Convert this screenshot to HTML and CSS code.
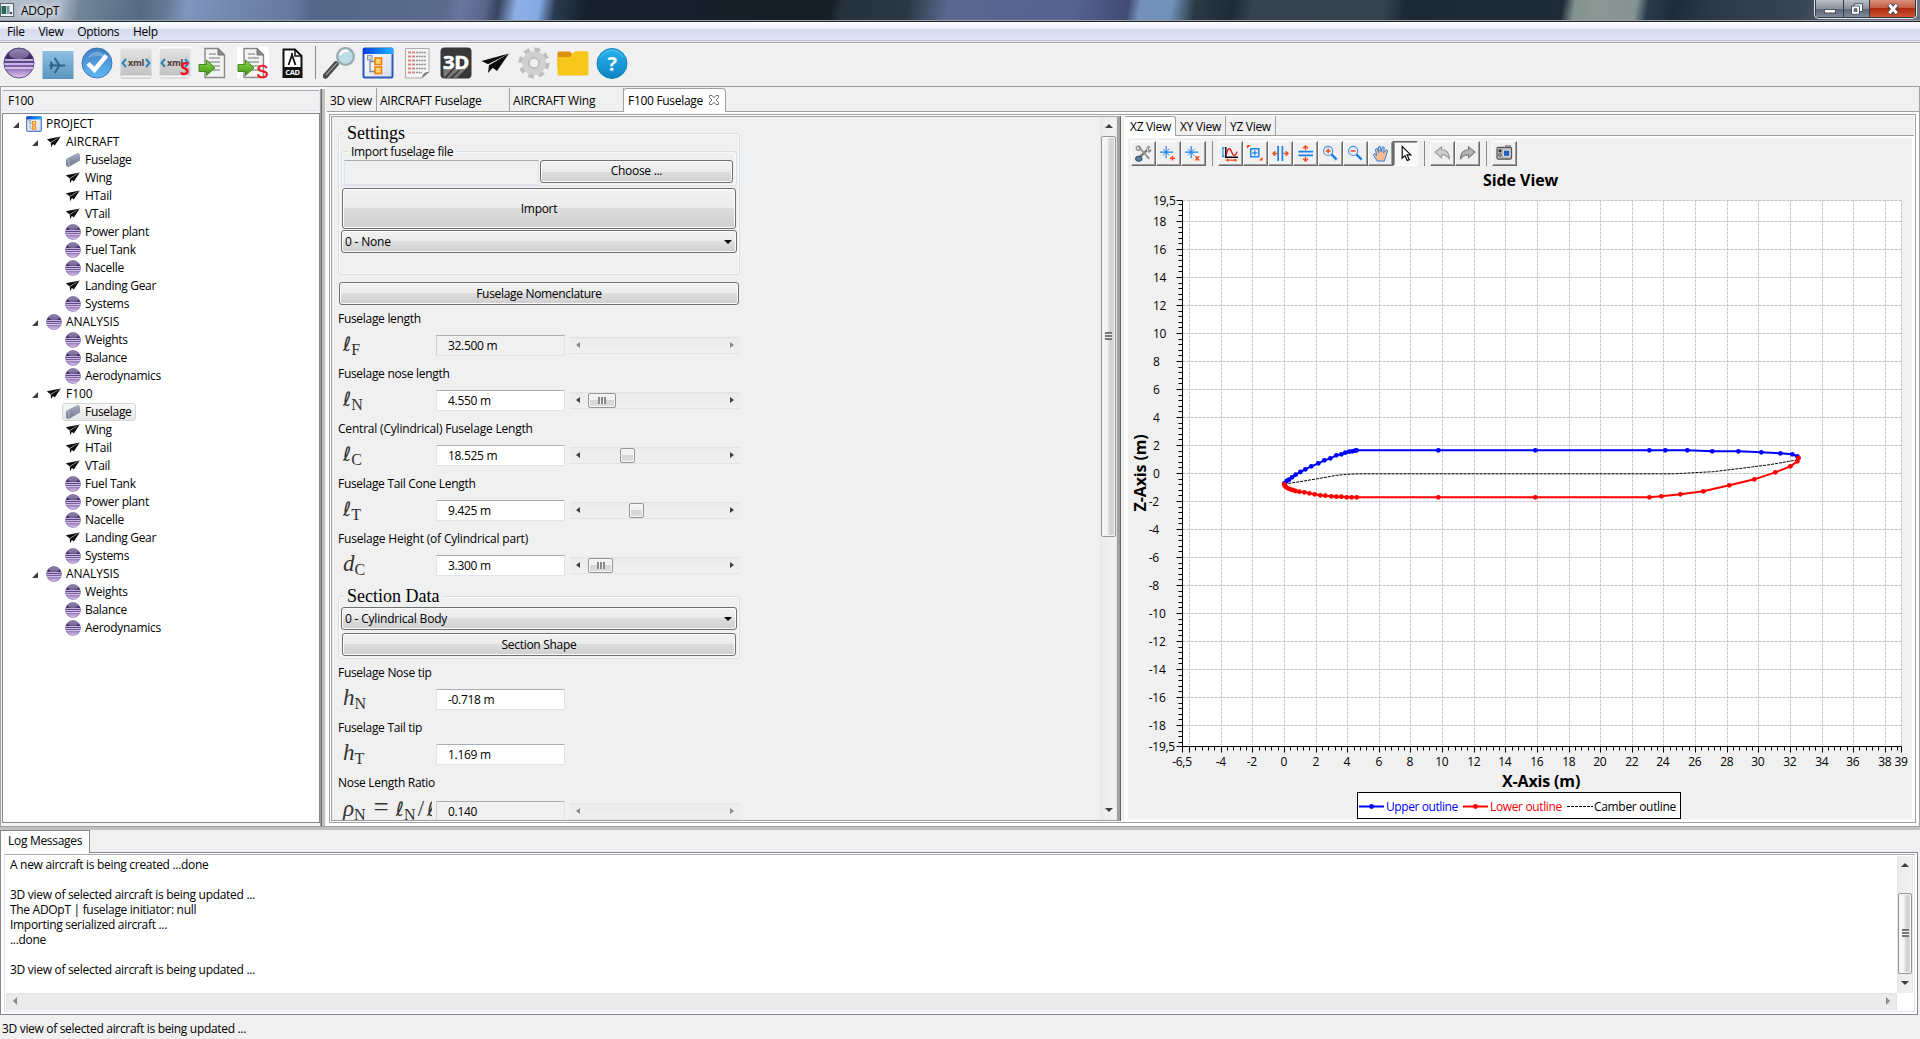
FILE: index.html
```html
<!DOCTYPE html>
<html lang="en">
<head>
<meta charset="utf-8">
<title>ADOpT</title>
<link rel="stylesheet" href="styles.css">
</head>
<body>
<svg class="sprite" aria-hidden="true">
  <defs>
    <linearGradient id="gPurple" x1="0" y1="0" x2="0" y2="1"><stop offset="0" stop-color="#6a5590"/><stop offset=".3" stop-color="#3c2466"/><stop offset=".6" stop-color="#7a5fa6"/><stop offset="1" stop-color="#e6c8f4"/></linearGradient>
    <linearGradient id="gBlueTop" x1="0" y1="0" x2="1" y2="0"><stop offset="0" stop-color="#0a3fe0"/><stop offset="1" stop-color="#19b4ff"/></linearGradient>
    <linearGradient id="gPage" x1="0" y1="0" x2="1" y2="1"><stop offset="0" stop-color="#fff"/><stop offset="1" stop-color="#d5dcef"/></linearGradient>
    <linearGradient id="gSky" x1="0" y1="0" x2="0" y2="1"><stop offset="0" stop-color="#8fc0e4"/><stop offset="1" stop-color="#5a95bd"/></linearGradient>
    <linearGradient id="gCheck" x1="0" y1="0" x2="0" y2="1"><stop offset="0" stop-color="#3d7fc4"/><stop offset="1" stop-color="#62b8f5"/></linearGradient>
    <linearGradient id="gGrey" x1="0" y1="0" x2="0" y2="1"><stop offset="0" stop-color="#e2e2e2"/><stop offset="1" stop-color="#bfbfbf"/></linearGradient>
    <linearGradient id="gGreen" x1="0" y1="0" x2="0" y2="1"><stop offset="0" stop-color="#8fd84a"/><stop offset="1" stop-color="#3f9416"/></linearGradient>
    <linearGradient id="gHelp" x1="0" y1="0" x2="0" y2="1"><stop offset="0" stop-color="#27b3ee"/><stop offset="1" stop-color="#1083c4"/></linearGradient>
    <linearGradient id="gFus" x1="0" y1="0" x2="0" y2="1"><stop offset="0" stop-color="#a9b0c2"/><stop offset="1" stop-color="#6e768a"/></linearGradient>
  </defs>
  <symbol id="ball" viewBox="0 0 32 32"><circle cx="16" cy="16" r="15" fill="url(#gPurple)" stroke="#5d4a88"/><ellipse cx="16" cy="7" rx="10" ry="5" fill="#fff" opacity=".3"/><path d="M2 13h28M1.500 17h29M2 21h28" stroke="#ead9f6" stroke-width="1.500"/></symbol>
  <symbol id="plane" viewBox="0 0 32 32"><path d="M2.500 14 30 6.500 9 17.300Z" fill="#0a0a0a"/><path d="M10 18.300 30 6.500 18 24 13.800 20.800 9 26Z" fill="#0a0a0a"/></symbol>
  <symbol id="planeSmall" viewBox="0 0 16 16"><path d="M.8 5.300 14.800 2.500 4.500 8.200Z" fill="#0a0a0a"/><path d="M4.800 8.800 14.800 2.500 8.800 11.500 7 10 5 13.300Z" fill="#0a0a0a"/><path d="M4.500 8.300 12 4.200" stroke="#777" stroke-width=".5"/></symbol>
  <symbol id="fus" viewBox="0 0 16 16"><path d="M1 7 12.500 1Q15 1 15 4V8.500L4.500 14.500Q1 15.500 1 12Z" fill="url(#gFus)"/><path d="M1.500 7Q4 7 4 9.500V14" stroke="#c5cad6" stroke-width=".8" fill="none"/></symbol>
  <symbol id="proj" viewBox="0 0 32 32"><rect x="1.500" y="1.500" width="29" height="29" rx="1" fill="url(#gPage)" stroke="#2f5bb8" stroke-width="2"/><rect x="1" y="1" width="30" height="6" fill="url(#gBlueTop)"/><path d="M8 9.500v15h5M8 14.500h5" stroke="#7c86a0" stroke-width="1.300" fill="none"/><rect x="5.500" y="8.500" width="4.500" height="4.500" fill="#cfd5e2" stroke="#8f98ae"/><rect x="13" y="11" width="6.500" height="6.500" fill="#ffd667" stroke="#ee7c12" stroke-width="1.600"/><rect x="13" y="20" width="6.500" height="6.500" fill="#ffd667" stroke="#ee7c12" stroke-width="1.600"/></symbol>
  <symbol id="doc" viewBox="0 0 32 32"><path d="M7 1.500H20L26.500 8V30.500H7Z" fill="#f2f2f2" stroke="#8a8a8a" stroke-width="1.400"/><path d="M20 1.500V8H26.500Z" fill="#888" stroke="#777"/><path d="M11 7h7M11 11h11M11 15h11M14 19h8M14 23h8" stroke="#a3a3a3" stroke-width="1.300"/><path d="M1 17.500H8.500V13L17 20.800 8.500 28.500V24.500H1Z" fill="url(#gGreen)" stroke="#3f8a1a"/></symbol>
  <symbol id="xml" viewBox="0 0 32 32"><rect x=".5" y="1.500" width="31" height="30" rx="2" fill="url(#gGrey)"/><path d="M1 29.500h30" stroke="#f7f7f7" stroke-width="2"/><path d="M6 12 2.500 16 6 20M26 12 29.500 16 26 20" stroke="#2b86b8" stroke-width="2" fill="none"/><text x="16" y="19" font-size="9" class="ico-b" text-anchor="middle" fill="#4d3a3a">xml</text></symbol>
</svg>

<header class="titlebar">
  <svg class="app" viewBox="0 0 14 14"><rect x=".5" y=".5" width="13" height="13" fill="#eef2f5" stroke="#5d6670"/><rect x="1.500" y="3" width="4.500" height="8" fill="#276a52"/><rect x="6.500" y="3" width="3" height="8" fill="#7a96ad"/><rect x="10" y="9" width="2" height="2" fill="#444"/></svg>
  <span class="title">ADOpT</span>
  <div class="winbtns">
    <span class="wb min"><svg viewBox="0 0 16 12"><rect x="2.500" y="6.500" width="11" height="3.500" fill="#fff" stroke="#4a5160"/></svg></span>
    <span class="wb max"><svg viewBox="0 0 16 12"><path d="M5 .8H13.500V8.500H5Z" fill="#fff" stroke="#4a5160"/><path d="M2.500 3H10.500V11.300H2.500Z" fill="#fff" stroke="#4a5160"/><rect x="5.300" y="5.800" width="2.500" height="2.500" fill="#7d8795" stroke="#4a5160"/></svg></span>
    <span class="wb close"><svg viewBox="0 0 16 12"><path d="M4 1.500 12 10.500M12 1.500 4 10.500" stroke="#4c4450" stroke-width="5"/><path d="M4.300 1.800 11.700 10.200M11.700 1.800 4.300 10.200" stroke="#fff" stroke-width="2.900"/></svg></span>
  </div>
</header>
<nav class="menubar"><span>File</span><span>View</span><span>Options</span><span>Help</span></nav>

<div class="toolbar">
  <svg><use href="#ball"/></svg>
  <svg viewBox="0 0 32 32"><rect x="1" y="1" width="30" height="6" fill="#f6f8fa"/><rect x=".5" y="4" width="31" height="28" fill="url(#gSky)"/><path d="M8 18.500H22.500M13 11.500 17.500 18.500 13 25.500M9 15.500 10.500 18.500 9 21.500" stroke="#2e6286" stroke-width="2" fill="none" stroke-linecap="round"/></svg>
  <svg viewBox="0 0 32 32"><circle cx="16" cy="16" r="15" fill="url(#gCheck)" stroke="#3f79b5"/><path d="M6 11Q16 -2 26 11 16 7 6 11Z" fill="#fff" opacity=".25"/><path d="M7 16.500 13.500 23 25.500 8.500" stroke="#fff" stroke-width="4.400" fill="none"/></svg>
  <svg><use href="#xml"/></svg>
  <svg viewBox="0 0 32 32"><rect width="32" height="32" fill="#fff"/><use href="#xml"/><text x="21" y="28" font-size="17" class="ico-b" fill="#f0101c">S</text></svg>
  <svg><use href="#doc"/></svg>
  <svg viewBox="0 0 32 32"><rect width="32" height="32" fill="#fff"/><use href="#doc"/><text x="19.500" y="30.500" font-size="18" class="ico-s" fill="#f0101c">S</text></svg>
  <svg viewBox="0 0 32 32"><path d="M7.500 2.500H19L25.500 9V30H7.500Z" fill="#fff" stroke="#111" stroke-width="2"/><path d="M19 2.500V9H25.500" fill="none" stroke="#111" stroke-width="1.500"/><path d="M12.500 18 16 8 19.500 18M16 6V9" stroke="#111" stroke-width="1.800" fill="none"/><rect x="7" y="20" width="19" height="10" fill="#111"/><text x="16.500" y="28" font-size="7.500" class="ico-b" fill="#fff" text-anchor="middle">CAD</text></svg>
  <i class="tsep"></i>
  <svg viewBox="0 0 32 32"><path d="M2.500 29 13 17" stroke="#4a4a4a" stroke-width="5.500" stroke-linecap="round"/><path d="M3 28 14 16" stroke="#999" stroke-width="1.300"/><ellipse cx="22.500" cy="9.500" rx="8.300" ry="8.500" fill="#bcdde6" stroke="#9aa7ac" stroke-width="2.200"/><path d="M17 8Q19 3 25 4" stroke="#fff" stroke-width="2.500" fill="none"/></svg>
  <svg><use href="#proj"/></svg>
  <svg viewBox="0 0 32 32"><path d="M4.500 1.500H28V25L21 31H4.500Z" fill="#f5f5f5" stroke="#ababab"/><path d="M28 25Q22 24 21 31Z" fill="#777"/><path d="M7 5.500h7M7 9.500h7M7 13.500h7M7 17.500h7M7 21.500h7M7 25.500h7" stroke="#e08585" stroke-width="1.800" stroke-dasharray="3 1"/><path d="M15 5.500h10M15 9.500h10M15 13.500h10M15 17.500h10M15 21.500h10M15 25.500h6" stroke="#929292" stroke-width="1.400" stroke-dasharray="2 .6"/></svg>
  <svg viewBox="0 0 32 32"><rect x=".5" y=".5" width="31" height="31" rx="4" fill="#38383a"/><path d="M3 21 12 22 4 31ZM14 22 21 21 9 31.500H6ZM22 21 28 20 16 31.500H12Z" fill="#77777a"/><text x="16" y="22" font-size="18.500" class="ico-b" fill="#fff" stroke="#fff" stroke-width=".6" text-anchor="middle" textLength="26" lengthAdjust="spacingAndGlyphs">3D</text></svg>
  <svg><use href="#plane"/></svg>
  <svg viewBox="0 0 32 32"><circle cx="16" cy="16" r="12.500" fill="none" stroke="#bdbdbd" stroke-width="6" stroke-dasharray="5.300 4.518"/><circle cx="16" cy="16" r="8.500" fill="none" stroke="#cfcfcf" stroke-width="7"/><circle cx="16" cy="16" r="5" fill="#f0f0f0" stroke="#a5a5a5"/></svg>
  <svg viewBox="0 0 32 32"><path d="M.5 6Q.5 4.500 2 4.500H13L16 8V20H.5Z" fill="#e09010"/><path d="M13 10 17 5Q17 4.300 18.500 4.300H30Q31.500 4.300 31.500 6V27Q31.500 28.500 30 28.500H2Q.5 28.500 .5 27V10Z" fill="#f5c71a"/></svg>
  <svg viewBox="0 0 32 32"><circle cx="16" cy="16.500" r="15" fill="url(#gHelp)" stroke="#1682bd"/><path d="M5 10Q16 -4 27 10" stroke="#7fd3f7" fill="none" opacity=".6"/><text x="16" y="23.500" font-size="20" class="ico-b" fill="#fff" text-anchor="middle">?</text></svg>
</div>

<main class="main">
  <aside class="left">
    <div class="lhead">F100</div>
    <ul class="tree">
      <li class="l0"><i class="exp"></i><svg><use href="#proj"/></svg><span>PROJECT</span></li>
      <li class="l1"><i class="exp"></i><svg><use href="#planeSmall"/></svg><span>AIRCRAFT</span></li>
      <li class="l2"><svg><use href="#fus"/></svg><span>Fuselage</span></li>
      <li class="l2"><svg><use href="#planeSmall"/></svg><span>Wing</span></li>
      <li class="l2"><svg><use href="#planeSmall"/></svg><span>HTail</span></li>
      <li class="l2"><svg><use href="#planeSmall"/></svg><span>VTail</span></li>
      <li class="l2"><svg><use href="#ball"/></svg><span>Power plant</span></li>
      <li class="l2"><svg><use href="#ball"/></svg><span>Fuel Tank</span></li>
      <li class="l2"><svg><use href="#ball"/></svg><span>Nacelle</span></li>
      <li class="l2"><svg><use href="#planeSmall"/></svg><span>Landing Gear</span></li>
      <li class="l2"><svg><use href="#ball"/></svg><span>Systems</span></li>
      <li class="l1"><i class="exp"></i><svg><use href="#ball"/></svg><span>ANALYSIS</span></li>
      <li class="l2"><svg><use href="#ball"/></svg><span>Weights</span></li>
      <li class="l2"><svg><use href="#ball"/></svg><span>Balance</span></li>
      <li class="l2"><svg><use href="#ball"/></svg><span>Aerodynamics</span></li>
      <li class="l1"><i class="exp"></i><svg><use href="#planeSmall"/></svg><span>F100</span></li>
      <li class="l2 sel"><svg><use href="#fus"/></svg><span>Fuselage</span></li>
      <li class="l2"><svg><use href="#planeSmall"/></svg><span>Wing</span></li>
      <li class="l2"><svg><use href="#planeSmall"/></svg><span>HTail</span></li>
      <li class="l2"><svg><use href="#planeSmall"/></svg><span>VTail</span></li>
      <li class="l2"><svg><use href="#ball"/></svg><span>Fuel Tank</span></li>
      <li class="l2"><svg><use href="#ball"/></svg><span>Power plant</span></li>
      <li class="l2"><svg><use href="#ball"/></svg><span>Nacelle</span></li>
      <li class="l2"><svg><use href="#planeSmall"/></svg><span>Landing Gear</span></li>
      <li class="l2"><svg><use href="#ball"/></svg><span>Systems</span></li>
      <li class="l1"><i class="exp"></i><svg><use href="#ball"/></svg><span>ANALYSIS</span></li>
      <li class="l2"><svg><use href="#ball"/></svg><span>Weights</span></li>
      <li class="l2"><svg><use href="#ball"/></svg><span>Balance</span></li>
      <li class="l2"><svg><use href="#ball"/></svg><span>Aerodynamics</span></li>
    </ul>
  </aside>
  <div class="split"></div>
  <section class="right">
    <div class="tabs">
      <span class="tab t1">3D view</span><span class="tab t2">AIRCRAFT Fuselage</span><span class="tab t3">AIRCRAFT Wing</span>
      <span class="tab t4 on">F100 Fuselage<svg viewBox="0 0 12 12"><path d="M1.500 1.500H4L6 3.800 8 1.500H10.500V3.500L8.200 6 10.500 8.500V10.500H8L6 8.200 4 10.500H1.500V8.500L3.800 6 1.500 3.500Z" fill="#fff" stroke="#707070"/></svg></span>
      <span class="tabfill"></span>
    </div>
    <div class="tabbody">
      <div class="editor">
        <div class="formbox">
          <div class="form">
            <div class="group settings"><span class="gtitle big">Settings</span>
              <div class="group import"><span class="gtitle">Import fuselage file</span>
                <div class="filefield"></div><div class="btn choose">Choose ...</div>
              </div>
              <div class="btn bigbtn">Import</div>
              <div class="btn combo">0 - None</div>
            </div>
            <div class="btn nomen">Fuselage Nomenclature</div>
            <div class="param"><label>Fuselage length</label><div class="prow"><span class="sym"><i class="ell">ℓ</i><sub>F</sub></span><span class="field ro">32.500 m</span><span class="slider off"></span></div></div>
            <div class="param"><label>Fuselage nose length</label><div class="prow"><span class="sym"><i class="ell">ℓ</i><sub>N</sub></span><span class="field">4.550 m</span><span class="slider"><b class="grip g1"></b></span></div></div>
            <div class="param"><label class="w">Central (Cylindrical) Fuselage Length</label><div class="prow"><span class="sym"><i class="ell">ℓ</i><sub>C</sub></span><span class="field">18.525 m</span><span class="slider"><b class="g2"></b></span></div></div>
            <div class="param"><label>Fuselage Tail Cone Length</label><div class="prow"><span class="sym"><i class="ell">ℓ</i><sub>T</sub></span><span class="field">9.425 m</span><span class="slider"><b class="g3"></b></span></div></div>
            <div class="param"><label class="w">Fuselage Height (of Cylindrical part)</label><div class="prow"><span class="sym"><i>d</i><sub>C</sub></span><span class="field">3.300 m</span><span class="slider"><b class="grip g4"></b></span></div></div>
            <div class="group section"><span class="gtitle big">Section Data</span>
              <div class="btn combo">0 - Cylindrical Body</div>
              <div class="btn shape">Section Shape</div>
            </div>
            <div class="param"><label>Fuselage Nose tip</label><div class="prow"><span class="sym"><i>h</i><sub>N</sub></span><span class="field">-0.718 m</span></div></div>
            <div class="param"><label>Fuselage Tail tip</label><div class="prow"><span class="sym"><i>h</i><sub>T</sub></span><span class="field">1.169 m</span></div></div>
            <div class="param ratio"><label>Nose Length Ratio</label><div class="prow"><span class="sym"><i>ρ</i><sub>N</sub><em>=</em><i class="ell">ℓ</i><sub>N</sub><u>/</u><i class="ell">ℓ</i></span><span class="field ro">0.140</span><span class="slider off"></span></div></div>
          </div>
          <div class="vbar"><i class="up"></i><b class="vthumb"></b><i class="down"></i></div>
        </div>
        <div class="split2"></div>
        <div class="chartbox">
          <div class="ctabs"><span class="on">XZ View</span><span>XY View</span><span>YZ View</span><em></em></div>
          <div class="chart">
            <div class="ctools">
              <svg viewBox="0 0 18 18"><path d="M3 15 13 5" stroke="#777" stroke-width="2.500"/><path d="M4 2 15 14.500" stroke="#9a9a9a" stroke-width="2.200"/><circle cx="3.500" cy="3.500" r="2.200" fill="none" stroke="#888" stroke-width="1.300"/><path d="M12 3.500Q13 1 16 2L14 4 15 6 17 5Q17 8 13.500 7.500" fill="#ccc" stroke="#777"/><ellipse cx="4" cy="14.500" rx="3.500" ry="2.700" fill="#5d7ba3" stroke="#2b415f"/></svg>
              <svg viewBox="0 0 18 18"><path d="M0 7.500H14M6.500 1V14" stroke="#1a80e8" stroke-width="1.200"/><path d="M3 4 10 11M10 4 3 11" stroke="#1a80e8" stroke-width=".9"/><path d="M10.500 14h5.500M13.200 11.500v5" stroke="#f04a1a" stroke-width="1.600"/></svg>
              <svg viewBox="0 0 18 18"><path d="M0 7.500H14M6.500 1V14" stroke="#1a80e8" stroke-width="1.200"/><path d="M3 4 10 11M10 4 3 11" stroke="#1a80e8" stroke-width=".9"/><path d="M11 12 15 16.500M15 12 11 16.500" stroke="#f04a1a" stroke-width="1.500"/></svg>
              <em class="cs"></em>
              <svg viewBox="0 0 18 18"><path d="M4 2V13H17" stroke="#000" stroke-width="1.500" fill="none"/><path d="M1 3V12M0 3H2.500M0 12H2.500" stroke="#1a80e8" stroke-width="1.200"/><path d="M4.500 11Q7 -1 10 7T16 7" stroke="#e01010" stroke-width="1.400" fill="none"/><path d="M4 16H16M6 14.500V17.500M14 14.500V17.500" stroke="#f04a1a" stroke-width="1.400"/></svg>
              <svg viewBox="0 0 18 18"><rect x="4" y="4" width="8.500" height="8.500" fill="none" stroke="#1a80e8" stroke-width="1.500"/><path d="M5.500 8.250h5.500M8.250 5.500v5.500" stroke="#1a80e8" stroke-width="1.300"/><path d="M0 0h4L0 4ZM16.500 16.500h-4L16.500 12.500Z" fill="#f04a1a"/></svg>
              <svg viewBox="0 0 18 18"><path d="M6.500 1V17M11 1V17" stroke="#1a80e8" stroke-width="1.800"/><path d="M1 9H5.500M12.500 9H17M3.500 6.500 1 9 3.500 11.500M14.500 6.500 17 9 14.500 11.500" stroke="#f04a1a" stroke-width="1.500" fill="none"/></svg>
              <svg viewBox="0 0 18 18"><path d="M1.500 7H17M1.500 11H17" stroke="#1a80e8" stroke-width="1.800"/><path d="M9 1V5.500M9 12.500V17M6.500 3.500 9 1 11.500 3.500M6.500 14.500 9 17 11.500 14.500" stroke="#f04a1a" stroke-width="1.500" fill="none"/></svg>
              <svg viewBox="0 0 18 18"><path d="M9.500 9.500 15.500 15.500" stroke="#1a80e8" stroke-width="2.600"/><circle cx="6.500" cy="6.300" r="4.800" fill="#e6eef8" stroke="#4a90dd" stroke-width="1.200"/><path d="M4 6.300h5M6.500 3.800v5" stroke="#f04a1a" stroke-width="1.700"/></svg>
              <svg viewBox="0 0 18 18"><path d="M9.500 9.500 15.500 15.500" stroke="#1a80e8" stroke-width="2.600"/><circle cx="6.500" cy="6.300" r="4.800" fill="#e6eef8" stroke="#4a90dd" stroke-width="1.200"/><path d="M4 6.300h5" stroke="#f04a1a" stroke-width="1.700"/></svg>
              <svg viewBox="0 0 18 18"><path d="M5.500 17 1.500 10.500 2.500 9 5 11 3.500 4.500 5.500 3.500 7 8 6.800 2 8.800 1.500 9.500 7.500 11 2 13 2.500 12.300 8.500 15 5 16.500 6 14.500 13 13 17Z" fill="#ffb890" stroke="#1a80e8" stroke-width="1"/></svg>
              <svg class="down" viewBox="0 0 18 18"><path d="M5.500 1.500V14L8.500 11.300 10.800 16.500 13 15.500 10.700 10.500H14.500Z" fill="#fff" stroke="#000" stroke-width="1.200"/></svg>
              <em class="cs"></em>
              <svg viewBox="0 0 18 18"><path d="M1 7.500 8 2V5Q16 5 16.500 15 13.500 10 8 10.500V13.500Z" fill="#cfcfcf" stroke="#9b9b9b" stroke-width="1.200"/></svg>
              <svg viewBox="0 0 18 18"><path d="M17 7.500 10 2V5Q2 5 1.500 15 4.500 10 10 10.500V13.500Z" fill="#b5b5b5" stroke="#7c7c7c" stroke-width="1.200"/></svg>
              <em class="cs"></em>
              <svg viewBox="0 0 18 18"><rect x="1" y="2.500" width="15.500" height="12.500" rx="1.500" fill="#b4b4b4" stroke="#555" stroke-width="1.200"/><rect x="8" y="5.500" width="6.500" height="6.500" fill="#1f5fc0" stroke="#ddd"/><circle cx="4.300" cy="6" r="1.600" fill="#333"/><circle cx="4.300" cy="10.500" r="1.400" fill="#eee" stroke="#444"/><path d="M9.500 1H15.500V2.500" stroke="#555" fill="none"/></svg>
            </div>
            <svg class="plot" id="plot" viewBox="1128 166 784 653"></svg>
          </div>
        </div>
      </div>
    </div>
  </section>
</main>
<div class="hsplit"></div>
<section class="log">
  <div class="logtabs"><span>Log Messages</span><em></em></div>
  <div class="logbody"><div class="logarea">
    <div class="logmain">
<pre class="logtext">A new aircraft is being created ...done

3D view of selected aircraft is being updated ...
The ADOpT | fuselage initiator: null
Importing serialized aircraft ...
...done

3D view of selected aircraft is being updated ...</pre>
      <div class="hbar"><i class="lf"></i><i class="rt"></i></div>
    </div>
    <div class="vbar vlog"><i class="up"></i><b class="vthumb"></b><i class="down"></i></div>
  </div></div>
</section>
<footer class="status">3D view of selected aircraft is being updated ...</footer>
<script src="chart.js"></script>
</body>
</html>
```
FILE: chart.js
```js
// Side view plot: draws grid, axes, outlines and legend.
const svg = document.getElementById('plot');
const NS = 'http://www.w3.org/2000/svg';
function add(tag, attrs, text) {
  const e = document.createElementNS(NS, tag);
  for (const k in attrs) e.setAttribute(k, attrs[k]);
  if (text !== undefined) e.textContent = text;
  svg.appendChild(e);
  return e;
}
const L = 1182.5, R = 1901.5, T = 200.5, B = 746.5;
const X = v => Math.floor(1181.7 + (v + 6.5) * 15.81) + 0.5;
const Y = v => Math.floor(T + (19.5 - v) * 14) + 0.5;

add('rect', { x: L, y: T, width: R - L, height: B - T, fill: '#fff' });
let grid = '';
for (let v = -6; v <= 38; v += 2) grid += `M${X(v)} ${B}V${T}`;
grid += `M${R} ${B}V${T}`;
for (let v = -18; v <= 18; v += 2) grid += `M${L} ${Y(v)}H${R}`;
grid += `M${L} ${T}H${R}`;
add('path', { d: grid, class: 'grid' });

let ticks = `M${L} ${T}V${B}H${R}`;
for (let i = -15; i <= 97; i++) {
  ticks += `M${X(i * 0.4)} ${B}v${i % 5 === 0 ? 6 : 4}`;
}
for (let i = -48; i <= 48; i++) {
  ticks += `M${L} ${Y(i * 0.4)}h${i % 5 === 0 ? -6 : -4}`;
}
ticks += `M${L} ${T}h-6M${L} ${B}h-6M${L} ${B}v6M${R} ${B}v6`;
add('path', { d: ticks, class: 'axis' });

function label(x, y, s, anchor, cls) {
  return add('text', { x, y, 'text-anchor': anchor || 'middle', class: cls || 'tick' }, s);
}
label(1182, 766, '-6,5');
for (let v = -4; v <= 38; v += 2) label(X(v) - 0.7, 766, String(v));
label(1901, 766, '39');
function ylabel(v, s) { label(s[0] === '-' ? 1148.8 : 1153, Y(v) + 4.5, s, 'start'); }
ylabel(19.5, '19,5');
ylabel(-19.5, '-19,5');
for (let v = -18; v <= 18; v += 2) ylabel(v, String(v));

label(1520.5, 186, 'Side View', 'middle', 'ptitle').setAttribute('textLength', 75);
label(1541, 786.5, 'X-Axis (m)', 'middle', 'ptitle').setAttribute('textLength', 78);
const z = label(0, 0, 'Z-Axis (m)', 'middle', 'ptitle');
z.setAttribute('transform', 'translate(1145.5 473) rotate(-90)');
z.setAttribute('textLength', 77);

// Outline stations, in thirds of a pixel from (1080, 420).
const upper = [[613,190],[620,183],[627,179],[636,172],[647,164],[661,156],[676,148],[694,139],[715,130],[733,121],[751,115],[769,106],[784,103],[796,98],[808,95],[817,94],[825,92],[830,91],[1075,91],[1366,91],[1708,91],[1756,91],[1822,91],[1897,94],[1975,94],[2044,97],[2101,100],[2137,103],[2152,109],[2155,114]];
const lower = [[613,193],[614,197],[618,201],[624,205],[631,208],[638,210],[646,213],[658,215],[673,217],[688,220],[704,223],[721,226],[736,227],[754,229],[769,230],[784,230],[800,232],[815,232],[830,232],[1075,232],[1366,232],[1708,232],[1744,229],[1801,223],[1870,214],[1948,196],[2023,178],[2086,157],[2131,139],[2152,124],[2155,114]];
const camber = [[613,192],[660,185],[720,175],[770,166],[800,163],[835,161.5],[1780,161.5],[1900,155],[2000,143],[2070,134],[2155,119]];
const px = p => [1080 + p[0] / 3, 420 + p[1] / 3];
const poly = pts => pts.map(p => px(p).join(',')).join(' ');
add('polyline', { points: poly(camber), class: 'camber' });
for (const [pts, c] of [[upper, '#00f'], [lower, '#f00']]) {
  add('polyline', { points: poly(pts), fill: 'none', stroke: c, 'stroke-width': 2 });
  for (const p of pts) {
    const [cx, cy] = px(p);
    add('circle', { cx, cy, r: 2.4, fill: c });
  }
}

// Legend
add('rect', { x: 1357.5, y: 792.5, width: 323, height: 26, fill: '#fff', stroke: '#000' });
function legend(x, tx, len, c, s) {
  if (c === '#000') add('path', { d: `M${x} 806.5h26`, class: 'camber' });
  else {
    add('path', { d: `M${x} 806.5h25`, stroke: c, 'stroke-width': 2 });
    add('circle', { cx: x + 12.5, cy: 806.5, r: 2.4, fill: c });
  }
  const t = label(tx, 811, s, 'start');
  t.setAttribute('textLength', len);
  t.setAttribute('fill', c);
}
legend(1359, 1386, 72, '#00f', 'Upper outline');
legend(1463, 1490, 72, '#f00', 'Lower outline');
legend(1567, 1594, 82, '#000', 'Camber outline');
```
FILE: styles.css
```css
* { box-sizing: border-box; }
html, body { margin: 0; height: 100%; }
body {
  display: flex; flex-direction: column; width: 1920px; height: 1039px; overflow: hidden;
  background: #f0f0f0; color: #000;
  font: 12px/16px "Open Sans", "Noto Sans", sans-serif; letter-spacing: -0.3px;
}
i { font-style: normal; }
.sprite { position: absolute; width: 0; height: 0; }
.ico-b { font-family: "Open Sans", sans-serif; font-weight: 700; letter-spacing: -.3px; }
.ico-s { font-family: "Liberation Sans", sans-serif; font-weight: 400; stroke: #f0101c; stroke-width: .5; letter-spacing: 0; }

.titlebar {
  height: 22px; flex: none; display: flex; border-bottom: 1px solid #1d2430; box-shadow: inset 0 -1px #9a9ea8;
  background: linear-gradient(100deg, #b3bcc8 0, #acb8c8 60px, #71859a 80px, #566a82 140px, #667a96 165px, #8096bd 185px, #7388ad 230px, #66799c 290px, #53678a 310px, #5b6b8c 440px, #6a76a0 455px, #5c668c 478px, #38445e 492px, #8fb0e6 510px, #85abe4 532px, #2b3a50 548px, #15202b 580px, #161f28 820px, #26323c 830px, #2b3844 895px, #42526c 915px, #5a678f 935px, #56628e 1060px, #414b74 1112px, #7591bd 1124px, #6f93b8 1155px, #2b3945 1178px, #1f2b38 1215px, #36434f 1235px, #34434f 1365px, #1c2835 1385px, #202b38 1540px, #83928f 1552px, #8a9793 1570px, #869394 1612px, #2b3b4c 1624px, #1e2b3a 1650px, #2c3949 1690px, #3a4656 1780px, #66707b 1815px, #6c7785 1915px);
}
.app { width: 14px; height: 14px; margin: 3px 0 0; }
.title { margin: 3px 0 0 7px; text-shadow: 0 0 6px #fff, 0 0 8px #fff; }
.winbtns { margin: 0 3px 0 auto; width: 103px; height: 19px; display: flex; border: 1px solid #e0e4ea; border-top: 0; border-radius: 0 0 5px 5px; background: #333a45; padding: 0 1px 1px; gap: 1px; }
.wb { display: flex; align-items: center; justify-content: center; width: 27px; background: linear-gradient(#b9bfc8, #8a929f 50%, #5c6675 51%, #7f8999); }
.wb svg { width: 16px; height: 12px; }
.max { width: 25px; }
.close { flex: 1; background: linear-gradient(#d9917f, #c65a42 48%, #b02a10 50%, #cc5434); }

.menubar {
  height: 22px; flex: none; display: flex; gap: 14px; padding: 2px 0 0 7px; letter-spacing: -.36px;
  background: linear-gradient(#fff, #e9ecf6 7px, #d4dbed 7px, #e0e5f6 18px, #b6bccc 18px, #b6bccc 19px, #f0f0f0 19px, #f0f0f0 20px, #a0a0a0 20px, #a0a0a0 21px, #fff 21px);
}
.toolbar { height: 42px; flex: none; display: flex; gap: 7px; padding: 3px 0 0 3px; }
.toolbar svg { width: 32px; height: 32px; flex: none; }
.tsep { width: 1px; height: 33px; margin: -1px 0 0; background: #8c8c8c; }

.main { height: 741px; flex: none; display: flex; border: solid #a0a0a0; border-width: 1px 1px 1px 0; background: #fff; }
.left { width: 320px; border-left: 1px solid #a0a0a0; padding: 3px 0 0 1px; background: #f5f5f7; }
.lhead { height: 21px; border: 1px solid #e3e6ee; border-top-color: #a6a6ae; border-radius: 2px; padding: 2px 0 0 5px; line-height: 16px; background: #f0f0f0; }
.tree { margin: 2px 0 0; height: 710px; padding: 1px 0 0; list-style: none; border: 1px solid #828790; background: #fff; }
.tree li { display: flex; align-items: center; height: 18px; width: max-content; position: relative; border: 1px solid transparent; }
.tree svg { width: 16px; height: 16px; margin-right: 4px; }
.tree .l0 { padding-left: 22px; letter-spacing: -.05px; }
.tree .l1 { padding-left: 42px; letter-spacing: -.05px; }
.tree .l2 { padding: 0 3px 0 2px; margin-left: 59px; }
.tree .sel { border-color: #d5d5d5; border-radius: 3px; background: linear-gradient(#f8f8f8, #e5e5e5); }
.exp { position: absolute; left: 9px; top: 6px; border-left: 6px solid transparent; border-bottom: 6px solid #404040; }
.l1 .exp { left: 28px; }
.split { width: 6px; background: linear-gradient(90deg, #a0a0a0 1px, #696969 1px, #696969 2px, #c0c0c0 2px, #c0c0c0 5px, #f4f4f4 5px); margin-top: 2px; }

.right { flex: 1; display: flex; flex-direction: column; }
.tabs { height: 25px; flex: none; display: flex; padding: 1px 0 0 1px; background: #f0f0f0; }
.tab { padding: 5px 0 0 3px; border: solid #a0a0a0; border-width: 0 1px 1px 0; white-space: nowrap; }
.t1 { width: 50px; } .t2 { width: 133px; letter-spacing: -.25px; } .t3 { width: 114px; letter-spacing: -.2px; }
.t4 { width: 103px; margin-left: -1px; display: flex; border-width: 1px 1px 0; border-radius: 4px 4px 0 0; background: #fff; padding: 4px 0 0 4px; }
.t4 svg { width: 12px; height: 12px; margin: 1px 5px 0 auto; }
.tabfill { flex: 1; border-bottom: 1px solid #a0a0a0; }
.tabbody { flex: 1; padding: 2px 3px 3px; background: #fff; }
.editor { height: 709px; display: flex; border: 1px solid #a0a0a0; padding: 1px; background: #fff; }
.formbox { width: 787px; height: 705px; border: 1px solid #a0a0a0; background: #f0f0f0; display: flex; justify-content: space-between; overflow: hidden; }
.form { width: 410px; height: 703px; overflow: hidden; padding: 16px 0 0 6px; }
.group { border: 1px solid #d5dfe5; border-radius: 3px; box-shadow: inset 0 0 0 1px #fafafa; display: flow-root; }
.gtitle { display: block; width: max-content; background: #f0f0f0; }
.big { font: 18px/20px "Liberation Serif", serif; letter-spacing: 0; padding: 0 3px; margin: -11px 0 0 5px; }
.settings { width: 402px; height: 142px; }
.import { width: 396px; height: 35px; margin: 8px 0 0 2px; display: flex; flex-wrap: wrap; padding: 0 3px 0 2px; }
.import .gtitle { margin: -8px 100px 0 4px; padding: 0 3px; }
.filefield { width: 195px; height: 25px; margin-top: -1px; border: 1px solid #e2e3ea; border-top-color: #abadb3; }
.btn { border: 1px solid #707070; border-radius: 3px; box-shadow: inset 0 0 0 1px #fcfcfc; background: linear-gradient(#f2f2f2, #ebebeb 50%, #dddddd 50%, #cfcfcf); display: flex; align-items: center; justify-content: center; height: 23px; }
.choose { width: 193px; margin: -1px 0 0 1px; }
.bigbtn { width: 394px; height: 41px; margin: 2px 0 0 3px; }
.combo { width: 396px; margin: 1px 0 0 2px; justify-content: flex-start; padding-left: 3px; letter-spacing: -.2px; }
.combo::after { content: ""; margin: 0 4px 0 auto; border: solid transparent; border-width: 4px 4px 0; border-top-color: #000; }
.nomen { width: 400px; margin: 7px 0 6px 1px; letter-spacing: -.32px; }
.param { height: 55px; display: flex; flex-direction: column; gap: 8px; }
.param label { height: 16px; }
.param .w { letter-spacing: -.2px; }
.prow { display: flex; height: 21px; }
.sym { width: 94px; padding-left: 5px; overflow: hidden; height: 30px; white-space: nowrap; font: 23px/18px "Liberation Serif", serif; letter-spacing: 0; color: #333; margin-right: 4px; }
.sym i { font-style: italic; line-height: 0; }
.sym .ell { font-style: normal; font-family: "DejaVu Serif", "DejaVu Sans", serif; font-size: 20px; line-height: 0; }
.sym sub { font-size: 16px; line-height: 0; vertical-align: -4px; }
.sym em { font-style: normal; margin: 0 7px 0 8px; font-size: 27px; line-height: 0; }
.sym u { text-decoration: none; margin: 0 3px 0 2px; }
.field { width: 129px; height: 21px; border: 1px solid #e2e3ea; border-top-color: #abadb3; border-radius: 1px; background: #fff; padding: 2px 0 0 11px; margin-right: 5px; }
.ro { background: #f0f0f0; border-left-color: #ccd0d8; }
.slider { position: relative; width: 170px; height: 17px; margin-top: 2px; border: solid #e3e3e3; border-width: 1px 0; background: linear-gradient(#ebebeb, #f0f0f0); }
.slider::before, .slider::after { content: ""; position: absolute; top: 4px; left: 6px; border: 3.5px solid transparent; border-left-width: 0; border-right: 4px solid #404040; }
.slider::after { left: auto; right: 6px; border: 3.5px solid transparent; border-right-width: 0; border-left: 4px solid #404040; }
.off::before { border-right-color: #8a8a8a; } .off::after { border-left-color: #8a8a8a; }
.slider b { position: absolute; top: 0; height: 15px; border: 1px solid #959595; border-radius: 2px; box-shadow: inset 0 0 0 1px #f7f7f7; background: linear-gradient(#f2f2f2 45%, #d6d6d8 50%, #dedee0); }
.g1 { left: 18px; width: 28px; } .g2 { left: 50px; width: 15px; } .g3 { left: 59px; width: 15px; } .g4 { left: 18px; width: 25px; }
.grip::after { content: ""; position: absolute; left: calc(50% - 4px); top: 3px; width: 8px; height: 7px; background: repeating-linear-gradient(90deg, #888 0 2px, #f4f4f4 2px 3px); }
.section { width: 402px; height: 63px; margin-bottom: 6px; margin-top: 10px; }
.section .combo { margin-top: 1px; }
.shape { width: 394px; margin: 3px 0 0 3px; }
.ratio { gap: 10px; }
.ratio .sym { line-height: 16px; }

.vbar { position: relative; width: 17px; border: solid #e6e6e6; border-width: 0 1px; background: linear-gradient(90deg, #ebebeb, #f2f2f2); }
.up, .down { position: absolute; left: 4px; border: 4px solid transparent; }
.up { border-top-width: 0; border-bottom-color: #404040; top: 7px; }
.vbar .down { border-bottom-width: 0; border-top-color: #404040; bottom: 8px; }
.vthumb { position: absolute; left: 0; width: 15px; top: 19px; height: 401px; border: 1px solid #959595; border-radius: 2px; box-shadow: inset 0 0 0 1px #f5f5f5; background: linear-gradient(90deg, #f5f5f5 40%, #d2d2d6 60%, #d9d9dc); }
.vthumb::after { content: ""; position: absolute; left: 3px; top: calc(50% - 5px); width: 7px; height: 8px; background: repeating-linear-gradient(#777 0 2px, #f4f4f4 2px 3px); }
.split2 { width: 7px; background: linear-gradient(90deg, #a0a0a0 2px, #696969 2px, #696969 3px, #f0f0f0 3px, #f0f0f0 6px, #fff 6px); }
.chartbox { width: 789px; display: flex; flex-direction: column; }
.ctabs { height: 20px; flex: none; display: flex; background: #f0f0f0; }
.ctabs span { width: 50px; padding: 3px 0 0 4px; border: solid #a0a0a0; border-width: 0 1px 1px 0; white-space: nowrap; line-height: 15px; }
.ctabs .on { background: #fff; border-width: 1px 1px 0 0; border-radius: 0 3px 0 0; padding-top: 2px; width: 51px; padding-left: 5px; }
.ctabs em { flex: 1; border-bottom: 1px solid #a0a0a0; }
.chart { margin: 2px 2px 0 3px; height: 681px; background: #f0f0f0; }
.ctools { height: 28px; display: flex; padding: 3px 0 0 3px; }
.ctools svg { width: 25px; height: 25px; padding: 3px; background: #f0f0f0; border: 1px solid; border-color: #fff #696969 #696969 #fff; box-shadow: inset -1px -1px #a0a0a0; flex: none; }
.ctools .down { position: static; border-color: #696969 #fff #fff #696969; box-shadow: inset 1px 1px #a0a0a0; background: #f8f8f8; }
.cs { width: 1px; height: 25px; background: #8c8c8c; margin: 0 5px 0 6px; }
.plot { display: block; width: 784px; height: 653px; }
.grid { stroke: #c4c4c4; stroke-dasharray: 3 1; fill: none; }
.axis { stroke: #000; fill: none; }
.camber { stroke: #000; stroke-dasharray: 3 1; fill: none; stroke-width: 1; }
.tick { font-size: 12px; letter-spacing: -.3px; }
.ptitle { font-size: 16px; font-weight: 700; }

.hsplit { height: 3px; flex: none; background: #c0c0c0; }
.log { height: 185px; flex: none; display: flex; flex-direction: column; width: 1918px; }
.logtabs { height: 23px; flex: none; display: flex; }
.logtabs span { width: 90px; border: 1px solid #828790; border-bottom: 0; background: #fff; padding: 2px 0 0 7px; }
.logtabs em { flex: 1; border-bottom: 1px solid #828790; }
.logbody { flex: 1; border: 1px solid #828790; border-top: 0; background: #fff; padding: 1px 2px 2px 3px; }
.logarea { height: 158px; border: 1px solid #e2e3ea; border-top-color: #abadb3; display: flex; padding: 1px; }
.logmain { flex: 1; display: flex; flex-direction: column; justify-content: space-between; }
.logtext { margin: 1px 0 0 4px; font: inherit; line-height: 15px; }
.hbar { position: relative; height: 17px; background: #ebebeb; border: 1px solid #e3e3e3; }
.lf, .rt { position: absolute; top: 3px; border: 4px solid transparent; }
.lf { left: 6px; border-left-width: 0; border-right-color: #8a8a8a; }
.rt { right: 6px; border-right-width: 0; border-left-color: #8a8a8a; }
.vlog { height: 137px; width: 16px; }
.vlog .vthumb { top: 37px; height: 81px; width: 14px; }
.vlog .up { left: 3px; } .vlog .down { left: 3px; }
.status { flex: 1; padding: 6px 0 0 2px; letter-spacing: -.32px; }
```
